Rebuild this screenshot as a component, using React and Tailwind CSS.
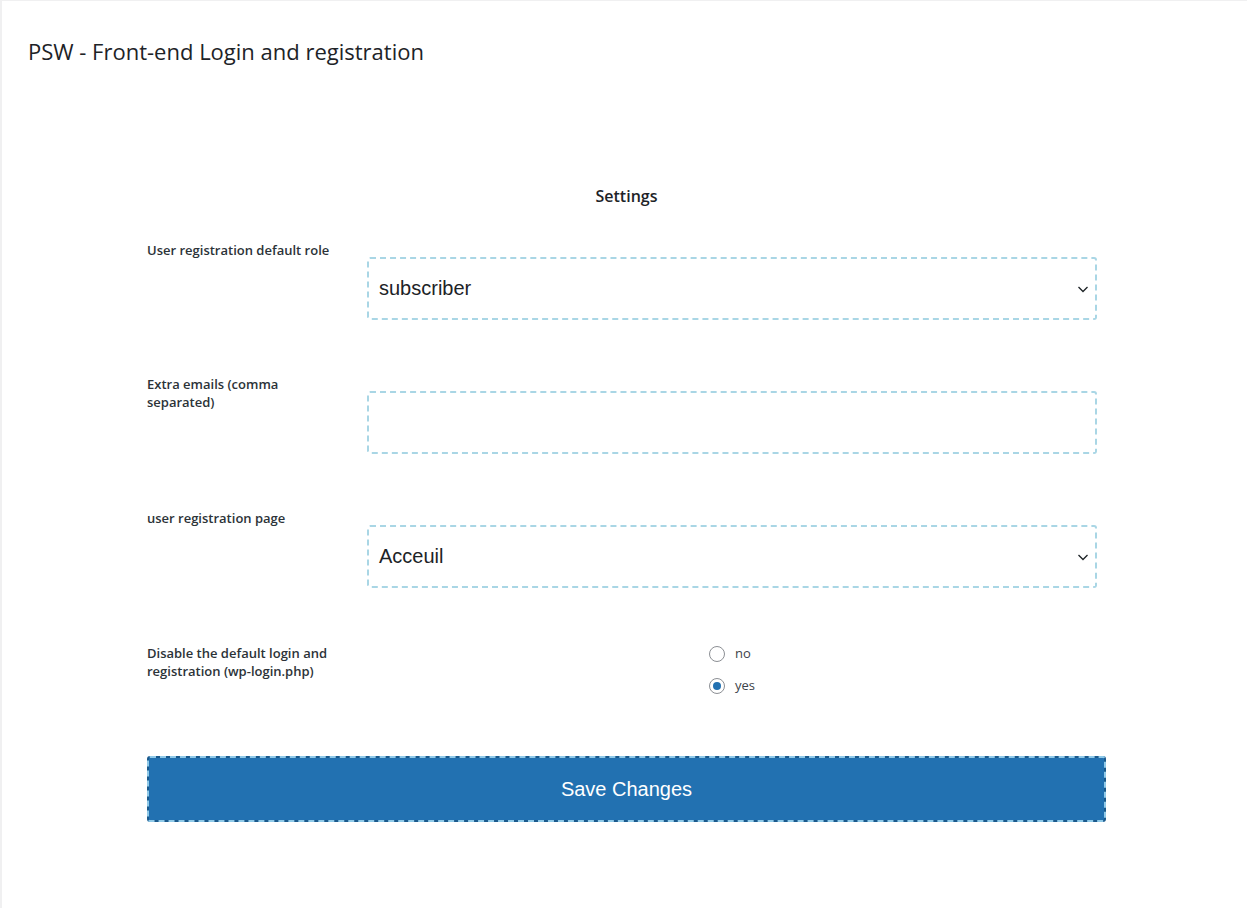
import React from 'react';

const labelCls = 'w-[220px] shrink-0 pr-[20px] text-[13px] leading-[18px] font-semibold text-[#2c3338]';
const boxCls =
  'w-[730px] h-[63px] rounded-[3px] border-2 border-dashed border-[#a9d6e5] bg-white px-[10px] flex items-center text-[20px] text-[#1d2327]';

const Chevron = () => (
  <svg width="12" height="12" viewBox="0 0 12 12" className="ml-auto -mr-[4px]">
    <path d="M1.5 4 L6 8.5 L10.5 4" fill="none" stroke="#1d2327" strokeWidth="1.3" />
  </svg>
);

const Radio = ({ checked, label }) => (
  <label className="flex items-center h-[32px] gap-[10px] text-[13px] text-[#3c434a]">
    <span className="w-[16px] h-[16px] rounded-full border border-[#8c8f94] bg-white flex items-center justify-center">
      {checked && <span className="w-[8px] h-[8px] rounded-full bg-[#2271b1]" />}
    </span>
    {label}
  </label>
);

export default function App() {
  return (
    <div
      className="min-h-[908px] bg-white border-t border-l-2 border-[#f0f0f1]"
      style={{ fontFamily: '"Open Sans", "Noto Sans", sans-serif' }}
    >
      <h1 className="pt-[35px] pl-[26px] text-[22px] leading-[30px] font-normal text-[#1d2327]">
        PSW - Front-end Login and registration
      </h1>

      <div className="w-[959px] ml-[145px] mt-[119px]">
        <h2 className="text-center text-[16px] leading-[22px] font-semibold text-[#1d2327]">Settings</h2>

        <div className="mt-[34px] flex">
          <div className={labelCls}>User registration default role</div>
          <div className={`${boxCls} mt-[16px]`} style={{ fontFamily: '"Liberation Sans", Arial, sans-serif' }}>
            <span className="-mt-[2px]">subscriber</span>
            <Chevron />
          </div>
        </div>

        <div className="mt-[55px] flex">
          <div className={labelCls}>Extra emails (comma separated)</div>
          <div className={`${boxCls} mt-[16px]`} />
        </div>

        <div className="mt-[55px] flex">
          <div className={labelCls}>user registration page</div>
          <div className={`${boxCls} mt-[16px]`} style={{ fontFamily: '"Liberation Sans", Arial, sans-serif' }}>
            <span className="-mt-[2px]">Acceuil</span>
            <Chevron />
          </div>
        </div>

        <div className="mt-[56px] flex">
          <div className={labelCls}>Disable the default login and registration (wp-login.php)</div>
          <div className="w-[730px] flex justify-center -mt-[6px]">
            <div className="flex flex-col">
              <Radio label="no" />
              <Radio checked label="yes" />
            </div>
          </div>
        </div>

        <div className="mt-[54px] rounded-[3px] bg-[#1b5a8d]">
          <button
            className="w-full h-[66px] rounded-[3px] border-2 border-dashed border-[#8fc9e8] bg-[#2271b1] bg-clip-padding text-white text-[20px]"
            style={{ fontFamily: '"Liberation Sans", Arial, sans-serif' }}
          >
            Save Changes
          </button>
        </div>
      </div>
    </div>
  );
}
